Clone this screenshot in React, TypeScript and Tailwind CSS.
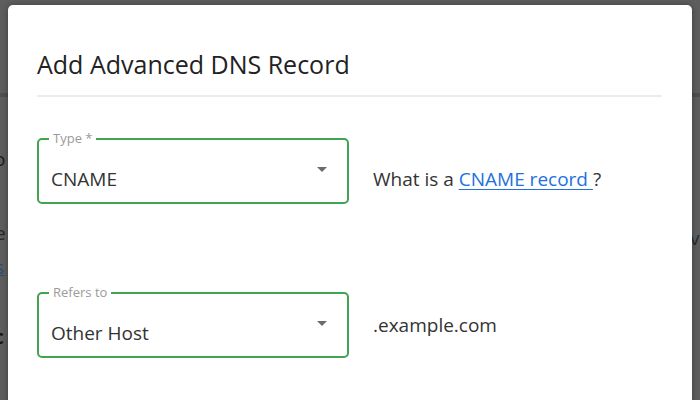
import React from "react";

function Caret() {
  return (
    <svg width="10" height="5" viewBox="0 0 10 5" className="shrink-0">
      <path d="M0 0h10L5 5z" fill="#6b6b6b" />
    </svg>
  );
}

function SelectField({ label, value, valueOffset }: { label: string; value: string; valueOffset: boolean }) {
  return (
    <div className="relative h-[66px] w-[312px] shrink-0 rounded-[5px] border-2 border-[#43a352]">
      <span className="absolute -top-[10px] left-[10px] bg-white px-[4px] text-[13px] leading-[16px] text-[#9a9a9a]">
        {label}
      </span>
      <div className="flex h-full items-center pl-[12px] pr-[20px]">
        <span className={"flex-1 text-[19px] text-[#333] " + (valueOffset ? "pt-4" : "pt-4")}>{value}</span>
        <span className="-mt-[4px]">
          <Caret />
        </span>
      </div>
    </div>
  );
}

export default function App() {
  return (
    <div
      className="relative h-[400px] w-[700px] overflow-hidden bg-[#5e5e5e]"
      style={{ fontFamily: '"Open Sans", "Noto Sans", sans-serif' }}
    >
      {/* page behind the backdrop */}
      <div className="flex h-full flex-col">
        <div className="h-[97px] shrink-0 border-b-[4px] border-[#4f4f4f]" />
        <div className="relative flex-1 text-[19px]">
          <span className="absolute -left-[6px] top-[48px] text-[#1c1c1c]">o</span>
          <span className="absolute -left-[5px] top-[122px] text-[#262626]">e</span>
          <span className="absolute -left-[5px] top-[156px] text-[#2c4a7a] underline">s</span>
          <span className="absolute -left-[6px] top-[226px] font-bold text-[#141414]">c</span>
          <span className="absolute left-[690px] top-[127px] text-[#2a2a2a]">v</span>
        </div>
      </div>

      {/* dialog */}
      <div className="absolute left-[8px] top-[5px] h-[420px] w-[684px] rounded-[5px] bg-white px-[29px] pt-[43px] shadow-[0_0_6px_rgba(0,0,0,0.35)]">
        <h2 className="text-[25px] leading-[32px] text-[#222]">Add Advanced DNS Record</h2>
        <div className="mt-[15px] h-[2px] w-[625px] bg-[#ececec]" />

        <div className="mt-[41px] flex items-center gap-[24px]">
          <SelectField label="Type *" value="CNAME" valueOffset />
          <p className="pt-4 text-[19px] text-[#333]">
            What is a{" "}
            <a href="#" className="text-[#2370e0] underline decoration-1 underline-offset-[3px]">
              CNAME record{" "}
            </a>
            ?
          </p>
        </div>

        <div className="mt-[88px] flex items-center gap-[24px]">
          <SelectField label="Refers to" value="Other Host" valueOffset />
          <p className="text-[19px] text-[#333]">.example.com</p>
        </div>
      </div>
    </div>
  );
}
